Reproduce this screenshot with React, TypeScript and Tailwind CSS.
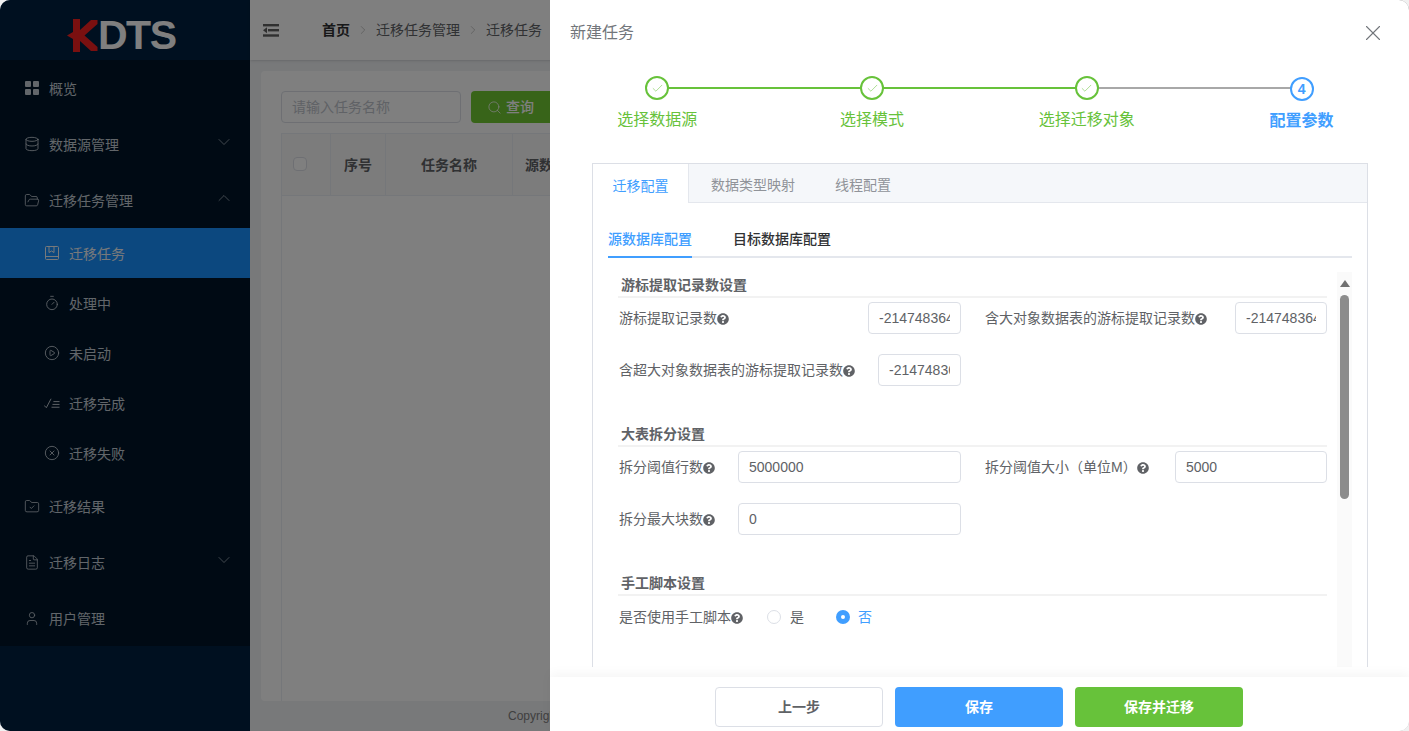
import React from "react";
import { Database, FolderOpen, Timer, CirclePlay, CircleX, FolderCheck, FileText, User, ChevronDown, ChevronUp, ChevronRight, Search, X, Check } from "lucide-react";
import { FaQuestionCircle } from "react-icons/fa";

const Grid = () => (
  <svg width="16" height="16" viewBox="0 0 16 16" fill="currentColor"><rect x="1" y="1" width="6" height="6" rx="1" /><rect x="9" y="1" width="6" height="6" rx="1" /><rect x="1" y="9" width="6" height="6" rx="1" /><rect x="9" y="9" width="6" height="6" rx="1" /></svg>
);
const Book = () => (
  <svg width="16" height="16" viewBox="0 0 16 16" fill="none" stroke="currentColor" strokeWidth="1"><rect x="1.5" y="1.5" width="13" height="13" rx="1" /><path d="M1.5 11.5h13M5 1.5v6l2.5-1.5L10 7.5v-6" /></svg>
);
const CheckList = () => (
  <svg width="17" height="16" viewBox="0 0 17 16" fill="none" stroke="currentColor" strokeWidth="1"><path d="M0 10.5l2.5 2.5L7.5 3.5M10 6.5h6.5M9 9.5h7.5M8 12.5h8.5" /></svg>
);

function Top({ icon, label, chev }: { icon: React.ReactNode; label: string; chev?: "up" | "down" }) {
  return (
    <div className="h-14 flex items-center pl-6 pr-4 text-[#c4ccd4] text-sm">
      <span className="w-4 h-4 flex items-center justify-center shrink-0">{icon}</span>
      <span className="ml-[9px] flex-1 pt-[2px]">{label}</span>
      {chev === "down" && <ChevronDown size={20} strokeWidth={0.8} className="-mt-1" />}
      {chev === "up" && <ChevronUp size={20} strokeWidth={0.8} className="-mt-1" />}
    </div>
  );
}
function Sub({ icon, label, active }: { icon: React.ReactNode; label: string; active?: boolean }) {
  return (
    <div className={`h-[50px] flex items-center pl-[44px] text-sm ${active ? "bg-[#1890ff] text-[#eef2f6]" : "text-[#c4ccd4]"}`}>
      <span className="w-4 h-4 flex items-center justify-center shrink-0">{icon}</span>
      <span className="ml-[9px] pt-[2px]">{label}</span>
    </div>
  );
}

function Help({ className = "" }: { className?: string }) {
  return <FaQuestionCircle size={12} className={`inline-block text-[#606266] shrink-0 ${className}`} />;
}

function Field({ label, value, inputW }: { label: string; value: string; inputW: string }) {
  return (
    <div className="flex items-start w-full">
      <div className="flex-1 h-8 flex items-center text-sm text-[#606266] whitespace-nowrap">
        <span>{label}</span>
        <Help className="mt-[2px]" />
      </div>
      <input readOnly value={value} className={`${inputW} h-8 shrink-0 border border-[#dcdfe6] rounded px-[10px] text-sm text-[#606266] bg-white outline-none`} />
    </div>
  );
}

function Section({ title }: { title: string }) {
  return (
    <div className="h-[23px] border-b-2 border-[#f2f2f2] pl-[3px] text-sm font-bold text-[#606266] leading-[20px]">{title}</div>
  );
}

function Step({ label, state, num }: { label: string; state: "done" | "active"; num?: number }) {
  const done = state === "done";
  return (
    <div className="w-[215px] flex flex-col items-center relative">
      {done ? (
        <div className="w-6 h-6 rounded-full border-2 border-[#67c23a] bg-white flex items-center justify-center z-10">
          <Check size={13} strokeWidth={1} className="text-[#67c23a]" />
        </div>
      ) : (
        <div className="w-6 h-6 mt-px rounded-full border-2 border-[#409eff] bg-white flex items-center justify-center z-10 text-[14px] font-bold text-[#409eff]">{num}</div>
      )}
      <div className={`${done ? "mt-[8px] text-[#67c23a]" : "mt-[8px] text-[#409eff] font-bold"} text-base leading-6 whitespace-nowrap`}>{label}</div>
    </div>
  );
}

export default function App() {
  return (
    <div className="w-[1409px] h-[731px] bg-[#f1f1f1]">
      <div className="relative w-full h-full overflow-hidden rounded-[10px] flex text-sm bg-white font-['Liberation_Sans','Noto_Sans_CJK_SC',sans-serif]">
        {/* sidebar */}
        <aside className="w-[250px] shrink-0 bg-[#002140] flex flex-col">
          <div className="h-[60px] flex items-center pl-[67px] pt-[10px]">
            <svg width="31" height="33" viewBox="0 0 31 33" fill="#f42020" className="shrink-0">
              <path d="M0 16.5L6 13V0H13V11L24 1H30.5V5L17.5 16.5L30.5 28V32H24L13 22V33H6V20Z" />
            </svg>
            <span className="text-[41px] leading-none font-bold text-white tracking-[-1.5px] font-['Liberation_Sans',sans-serif]">DTS</span>
          </div>
          <nav className="bg-[#001529]">
            <Top icon={<Grid />} label="概览" />
            <Top icon={<Database size={18} strokeWidth={1.3} />} label="数据源管理" chev="down" />
            <Top icon={<FolderOpen size={19} strokeWidth={1.2} />} label="迁移任务管理" chev="up" />
            <div>
              <Sub icon={<Book />} label="迁移任务" active />
              <Sub icon={<Timer size={18} strokeWidth={1.3} />} label="处理中" />
              <Sub icon={<CirclePlay size={18} strokeWidth={1.3} />} label="未启动" />
              <Sub icon={<CheckList />} label="迁移完成" />
              <Sub icon={<CircleX size={18} strokeWidth={1.3} />} label="迁移失败" />
            </div>
            <Top icon={<FolderCheck size={19} strokeWidth={1.2} />} label="迁移结果" />
            <Top icon={<FileText size={19} strokeWidth={1.2} />} label="迁移日志" chev="down" />
            <Top icon={<User size={19} strokeWidth={1.2} />} label="用户管理" />
          </nav>
        </aside>

        {/* main */}
        <main className="flex-1 flex flex-col min-w-0 bg-[#f0f2f5]">
          <header className="h-[60px] shrink-0 bg-white flex items-center pl-[13px] text-[#606266] shadow-sm">
            <svg width="16" height="13" viewBox="0 0 16 13" fill="#606060"><rect width="16" height="2.4" /><rect x="5" y="5" width="11" height="2.4" /><rect y="10.3" width="16" height="2.4" /><path d="M0 6.2l4-3v6z" /></svg>
            <span className="ml-[43px] font-bold text-[#303133]">首页</span>
            <ChevronRight size={14} strokeWidth={1} className="mx-[6px] text-[#a0a0a0]" />
            <span>迁移任务管理</span>
            <ChevronRight size={14} strokeWidth={1} className="mx-[6px] text-[#a0a0a0]" />
            <span className="whitespace-nowrap">迁移任务</span>
          </header>
          <div className="flex-1 pt-[11px] pl-[11px] flex flex-col min-h-0">
            <div className="bg-white h-[630px] rounded-sm p-5 pb-0 flex flex-col">
              <div className="flex gap-[10px]">
                <div className="w-[180px] h-8 border border-[#dcdfe6] rounded px-[10px] flex items-center text-[#c0c4cc]">请输入任务名称</div>
                <div className="w-[100px] h-8 rounded bg-[#70c832] text-white font-medium flex items-center pl-4 gap-1"><Search size={15} strokeWidth={1.2} />查询</div>
              </div>
              <div className="mt-[10px] flex-1 border-l border-[#ebeef5] flex flex-col">
                <div className="h-[63px] border-y border-[#ebeef5] bg-[#f9f9f9] flex font-bold text-[#606266]">
                  <div className="w-[49px] border-r border-[#ebeef5] flex items-center pl-[11px]"><span className="-mt-px w-[14px] h-[14px] rounded-sm border border-[#dcdfe6] bg-white" /></div>
                  <div className="w-[55px] border-r border-[#ebeef5] flex items-center justify-center">序号</div>
                  <div className="w-[127px] border-r border-[#ebeef5] flex items-center justify-center">任务名称</div>
                  <div className="w-[100px] flex items-center pl-3">源数据</div>
                </div>
              </div>
            </div>
            <div className="h-[30px] flex items-center pl-[247px] text-xs text-[#808080]">Copyright</div>
          </div>
        </main>

        {/* mask */}
        <div className="absolute inset-0 bg-black/50" />

        {/* drawer */}
        <section className="absolute right-0 top-0 bottom-0 w-[859px] bg-white flex flex-col">
          <div className="h-[64px] shrink-0 flex items-center justify-between pl-5 pr-[23px] pt-[2px] text-[#72767b] text-base">
            <span>新建任务</span>
            <X size={26} strokeWidth={1} className="text-[#72767b]" />
          </div>
          <div className="flex relative h-[99px] shrink-0 pt-3">
            <div className="absolute left-[107px] w-[430px] top-[23px] h-[2px] bg-[#67c23a]" />
            <div className="absolute left-[537px] w-[215px] top-[23px] h-[2px] bg-[#a8a8a8]" />
            <Step label="选择数据源" state="done" />
            <Step label="选择模式" state="done" />
            <Step label="选择迁移对象" state="done" />
            <Step label="配置参数" state="active" num={4} />
          </div>

          <div className="flex-1 min-h-0 ml-[42px] mr-[41px] border-x border-t border-[#dcdfe6] flex flex-col mb-[10px]">
            <div className="h-[39px] shrink-0 bg-[#f5f7fa] border-b border-[#e4e7ed] flex text-sm text-[#909399]">
              <div className="w-[96px] h-[39px] pt-1 bg-white border-r border-[#e4e7ed] flex items-center justify-center text-[#409eff]">迁移配置</div>
              <div className="pl-[22px] pt-1 flex items-center">数据类型映射</div>
              <div className="pl-[40px] pt-1 flex items-center">线程配置</div>
            </div>
            <div className="flex-1 min-h-0 px-[15px] flex flex-col">
              <div className="h-[55px] shrink-0 border-b-2 border-[#e4e7ed] flex items-end text-sm text-[#303133] font-medium">
                <div className="h-[55px] flex items-center pt-[18px] border-b-2 border-[#409eff] -mb-[2px] text-[#409eff]">源数据库配置</div>
                <div className="h-[55px] flex items-center pt-[18px] ml-[41px] -mb-[2px] border-b-2 border-transparent">目标数据库配置</div>
              </div>
              <div className="flex-1 min-h-0 flex mt-[14px] overflow-hidden">
                <div className="w-[709px] ml-[10px] shrink-0 pt-[3px]">
                  <Section title="游标提取记录数设置" />
                  <div className="flex mt-1 gap-6">
                    <div className="w-[343px] pl-px"><Field label="游标提取记录数" value="-2147483648" inputW="w-[93px]" /></div>
                    <div className="w-[342px]"><Field label="含大对象数据表的游标提取记录数" value="-2147483648" inputW="w-[92px]" /></div>
                  </div>
                  <div className="w-[343px] pl-px mt-5"><Field label="含超大对象数据表的游标提取记录数" value="-2147483648" inputW="w-[83px]" /></div>
                  <div className="mt-[38px]"><Section title="大表拆分设置" /></div>
                  <div className="flex mt-1 gap-6">
                    <div className="w-[343px] pl-px"><Field label="拆分阈值行数" value="5000000" inputW="w-[223px]" /></div>
                    <div className="w-[342px]"><Field label="拆分阈值大小（单位M）" value="5000" inputW="w-[152px]" /></div>
                  </div>
                  <div className="w-[343px] pl-px mt-5"><Field label="拆分最大块数" value="0" inputW="w-[223px]" /></div>
                  <div className="mt-[38px]"><Section title="手工脚本设置" /></div>
                  <div className="h-8 mt-[5px] pl-px flex items-center text-sm text-[#606266]">
                    <span>是否使用手工脚本</span><Help className="mt-[2px]" />
                    <span className="ml-[24px] -mt-px w-[14px] h-[14px] rounded-full border border-[#dcdfe6] bg-white" />
                    <span className="ml-[9px]">是</span>
                    <span className="ml-[32px] -mt-px w-[14px] h-[14px] rounded-full bg-[#409eff] flex items-center justify-center"><span className="w-1 h-1 rounded-full bg-white" /></span>
                    <span className="ml-2 text-[#409eff]">否</span>
                  </div>
                </div>
                <div className="ml-[10px] w-[15px] shrink-0 bg-[#fafafa] flex flex-col items-center">
                  <svg width="10" height="7" viewBox="0 0 10 7" fill="#707070" className="mt-2"><path d="M5 0L10 7H0z" /></svg>
                  <div className="w-[9px] h-[204px] mt-2 shrink-0 rounded-full bg-[#8c8c8c]" />
                </div>
              </div>
            </div>
          </div>

          <footer className="h-[54px] shrink-0 bg-white flex justify-start items-start pt-[10px] pl-[165px] gap-3 text-sm font-bold shadow-[0_-4px_10px_rgba(0,0,0,0.04)] relative">
            <div className="w-[168px] h-10 rounded border border-[#dcdfe6] flex items-center justify-center text-[#606266] bg-white">上一步</div>
            <div className="w-[168px] h-10 rounded bg-[#409eff] flex items-center justify-center text-white">保存</div>
            <div className="w-[168px] h-10 rounded bg-[#67c23a] flex items-center justify-center text-white">保存并迁移</div>
          </footer>
        </section>
      </div>
    </div>
  );
}
